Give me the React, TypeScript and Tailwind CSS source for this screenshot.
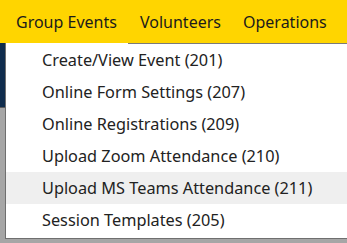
const navItems = [
  { label: "Group Events", width: "w-[128px]", pad: "pl-[16px]" },
  { label: "Volunteers", width: "w-[103px]", pad: "pl-[12px]" },
  { label: "Operations", width: "flex-1", pad: "pl-[12px]" },
];

const menuItems = [
  "Create/View Event (201)",
  "Online Form Settings (207)",
  "Online Registrations (209)",
  "Upload Zoom Attendance (210)",
  "Upload MS Teams Attendance (211)",
  "Session Templates (205)",
];

const App = () => {
  return (
    <div
      className="w-[347px] h-[243px] overflow-hidden bg-[#a6a6a6] flex flex-col"
      style={{ fontFamily: '"Noto Sans", "Open Sans", sans-serif' }}
    >
      {/* top nav */}
      <div className="h-[43px] bg-[#ffd500] flex items-center shrink-0">
        {navItems.map((item) => (
          <div
            key={item.label}
            className={`${item.width} ${item.pad} text-[16px] text-[#1b1b1b] leading-none`}
          >
            {item.label}
          </div>
        ))}
      </div>

      <div className="flex">
        {/* page behind the overlay */}
        <div className="w-[5px] shrink-0">
          <div className="h-[65px] bg-[#0f2c4c] border-b border-[#5a5a5a]" />
        </div>

        {/* dropdown */}
        <div className="flex-1 bg-white border-l border-b border-[#6f6f6f] pb-[2px]">
          <div className="flex h-px">
            <div className="w-[122px] bg-white" />
            <div className="flex-1 bg-[#7a7a7a]" />
          </div>
          {menuItems.map((item, idx) => (
            <div
              key={idx}
              className={`${
                idx === 4 ? "bg-[#efefef]" : "bg-white"
              } h-[32px] flex items-center pl-[36px] text-[16.3px] text-[#222222] whitespace-nowrap`}
            >
              {item}
            </div>
          ))}
        </div>
      </div>
    </div>
  );
};

export default App;
